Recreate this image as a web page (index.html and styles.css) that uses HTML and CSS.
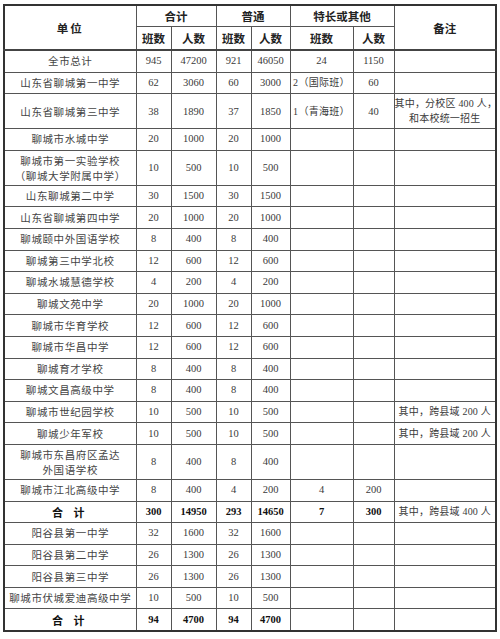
FILE: index.html
```html
<!DOCTYPE html>
<html lang="zh-CN">
<head>
<meta charset="utf-8">
<title>招生计划</title>
<link rel="stylesheet" href="styles.css">
</head>
<body>
<table class="plan">
  <colgroup>
    <col class="c-name">
    <col class="c-a">
    <col class="c-b">
    <col class="c-c">
    <col class="c-d">
    <col class="c-e">
    <col class="c-f">
    <col class="c-note">
  </colgroup>
  <thead>
    <tr class="h1">
      <th rowspan="2" class="wide">单位</th>
      <th colspan="2">合计</th>
      <th colspan="2">普通</th>
      <th colspan="2">特长或其他</th>
      <th rowspan="2" class="note-h">备注</th>
    </tr>
    <tr class="h2">
      <th>班数</th><th>人数</th><th>班数</th><th>人数</th><th>班数</th><th>人数</th>
    </tr>
  </thead>
  <tbody>
    <tr class="r"><td>全市总计</td><td>945</td><td>47200</td><td>921</td><td>46050</td><td>24</td><td>1150</td><td></td></tr>
    <tr class="r"><td>山东省聊城第一中学</td><td>62</td><td>3060</td><td>60</td><td>3000</td><td class="tight">2（国际班）</td><td>60</td><td></td></tr>
    <tr class="rr"><td>山东省聊城第三中学</td><td>38</td><td>1890</td><td>37</td><td>1850</td><td class="tight">1（青海班）</td><td>40</td><td class="note">其中，分校区 400 人，<br>和本校统一招生</td></tr>
    <tr class="r"><td>聊城市水城中学</td><td>20</td><td>1000</td><td>20</td><td>1000</td><td></td><td></td><td></td></tr>
    <tr class="rr"><td>聊城市第一实验学校<br>（聊城大学附属中学）</td><td>10</td><td>500</td><td>10</td><td>500</td><td></td><td></td><td></td></tr>
    <tr class="r"><td>山东聊城第二中学</td><td>30</td><td>1500</td><td>30</td><td>1500</td><td></td><td></td><td></td></tr>
    <tr class="r"><td>山东省聊城第四中学</td><td>20</td><td>1000</td><td>20</td><td>1000</td><td></td><td></td><td></td></tr>
    <tr class="r"><td>聊城颐中外国语学校</td><td>8</td><td>400</td><td>8</td><td>400</td><td></td><td></td><td></td></tr>
    <tr class="r"><td>聊城第三中学北校</td><td>12</td><td>600</td><td>12</td><td>600</td><td></td><td></td><td></td></tr>
    <tr class="r"><td>聊城水城慧德学校</td><td>4</td><td>200</td><td>4</td><td>200</td><td></td><td></td><td></td></tr>
    <tr class="r"><td>聊城文苑中学</td><td>20</td><td>1000</td><td>20</td><td>1000</td><td></td><td></td><td></td></tr>
    <tr class="r"><td>聊城市华育学校</td><td>12</td><td>600</td><td>12</td><td>600</td><td></td><td></td><td></td></tr>
    <tr class="r"><td>聊城市华昌中学</td><td>12</td><td>600</td><td>12</td><td>600</td><td></td><td></td><td></td></tr>
    <tr class="r"><td>聊城育才学校</td><td>8</td><td>400</td><td>8</td><td>400</td><td></td><td></td><td></td></tr>
    <tr class="r"><td>聊城文昌高级中学</td><td>8</td><td>400</td><td>8</td><td>400</td><td></td><td></td><td></td></tr>
    <tr class="r"><td>聊城市世纪园学校</td><td>10</td><td>500</td><td>10</td><td>500</td><td></td><td></td><td class="note">其中，跨县域 200 人</td></tr>
    <tr class="r"><td>聊城少年军校</td><td>10</td><td>500</td><td>10</td><td>500</td><td></td><td></td><td class="note">其中，跨县域 200 人</td></tr>
    <tr class="rr"><td>聊城市东昌府区孟达<br>外国语学校</td><td>8</td><td>400</td><td>8</td><td>400</td><td></td><td></td><td></td></tr>
    <tr class="r"><td>聊城市江北高级中学</td><td>8</td><td>400</td><td>4</td><td>200</td><td>4</td><td>200</td><td></td></tr>
    <tr class="r total"><td class="sum">合 计</td><td>300</td><td>14950</td><td>293</td><td>14650</td><td>7</td><td>300</td><td class="note plain">其中，跨县域 400 人</td></tr>
    <tr class="r"><td>阳谷县第一中学</td><td>32</td><td>1600</td><td>32</td><td>1600</td><td></td><td></td><td></td></tr>
    <tr class="r"><td>阳谷县第二中学</td><td>26</td><td>1300</td><td>26</td><td>1300</td><td></td><td></td><td></td></tr>
    <tr class="r"><td>阳谷县第三中学</td><td>26</td><td>1300</td><td>26</td><td>1300</td><td></td><td></td><td></td></tr>
    <tr class="r"><td>聊城市伏城爱迪高级中学</td><td>10</td><td>500</td><td>10</td><td>500</td><td></td><td></td><td></td></tr>
    <tr class="r total"><td class="sum">合 计</td><td>94</td><td>4700</td><td>94</td><td>4700</td><td></td><td></td><td></td></tr>
  </tbody>
</table>
</body>
</html>
```
FILE: styles.css
```css
html, body {
  margin: 0;
  padding: 0;
  background: #ffffff;
}

body {
  padding: 4px 0 0 3px;
}

.plan {
  border-collapse: collapse;
  table-layout: fixed;
  width: 492px;
  border: 2px solid #333;
  font-family: "Liberation Serif", "Noto Sans CJK SC", serif;
  font-size: 10.5px;
  color: #3a3a3a;
}

.c-name { width: 132px; }
.c-a { width: 35px; }
.c-b { width: 45px; }
.c-c { width: 35px; }
.c-d { width: 39px; }
.c-e { width: 63px; }
.c-f { width: 41px; }
.c-note { width: 102px; }

.plan th,
.plan td {
  border: 1px solid #555;
  padding: 0;
  text-align: center;
  vertical-align: middle;
  line-height: 14px;
  overflow: hidden;
  white-space: nowrap;
}

.plan th {
  font-family: "Noto Sans CJK SC", sans-serif;
  font-weight: 700;
  font-size: 11.5px;
  color: #222;
}

.plan thead tr.h1 th { height: 20px; }
.plan thead tr.h2 th { height: 22px; border-bottom: 2px solid #444; }

.plan th.wide { letter-spacing: 2px; border-bottom: 2px solid #444; }
.plan th.note-h { border-bottom: 2px solid #444; }

.plan td:first-child {
  font-family: "Noto Sans CJK SC", serif;
  font-size: 10.5px;
  letter-spacing: 0.6px;
  color: #444;
}

.plan tr.r td { height: 20.6px; }
.plan tr.rr td { height: 34px; line-height: 15px; }

.plan td.tight {
  font-size: 10px;
  letter-spacing: 0.3px;
}

.plan td.note {
  font-size: 10px;
  letter-spacing: 0.2px;
}

.plan tr.total td {
  font-weight: 700;
  color: #111;
}

.plan tr.total td.sum {
  font-family: "Noto Sans CJK SC", sans-serif;
  font-weight: 700;
  font-size: 11px;
  letter-spacing: 4px;
  color: #111;
}

.plan tr.total td.plain {
  font-weight: 400;
  color: #3a3a3a;
}
```
